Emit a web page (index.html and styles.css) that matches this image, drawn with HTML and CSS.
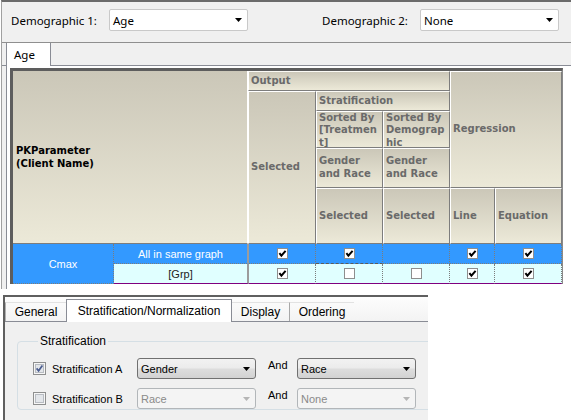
FILE: index.html
```html
<!DOCTYPE html>
<html>
<head>
  <meta charset="UTF-8">
  <title>Demographic output</title>
  <link rel="stylesheet" href="styles.css">
</head>
<body>
  <svg class="defs" width="0" height="0">
    <symbol id="chk" viewBox="0 0 11 11">
      <rect x="0.5" y="0.5" width="10" height="10" fill="#fff" stroke="#8e8e8e"/>
      <path d="M2.4 5.2 4.4 7.6 8.6 2.8" fill="none" stroke="#000" stroke-width="2"/>
    </symbol>
    <symbol id="box" viewBox="0 0 11 11">
      <rect x="0.5" y="0.5" width="10" height="10" fill="#fff" stroke="#8e8e8e"/>
    </symbol>
    <symbol id="arrow" viewBox="0 0 7 4">
      <path d="M0 0h7L3.5 4z" fill="currentColor"/>
    </symbol>
    <symbol id="win-chk" viewBox="0 0 13 13">
      <rect x="0.5" y="0.5" width="12" height="12" fill="#f6f6f6" stroke="#8e8f8f"/>
      <rect x="2.5" y="2.5" width="8" height="8" fill="#e3e6ea" stroke="#b8bcc2"/>
      <path d="M3.6 6.4 5.6 8.8 9.4 3.6" fill="none" stroke="#4b5d8f" stroke-width="1.7"/>
    </symbol>
    <symbol id="win-box" viewBox="0 0 13 13">
      <rect x="0.5" y="0.5" width="12" height="12" fill="#f6f6f6" stroke="#8e8f8f"/>
      <rect x="2.5" y="2.5" width="8" height="8" fill="#e3e6ea" stroke="#b8bcc2"/>
    </symbol>
  </svg>

  <div class="shot shot-top">
    <div class="filters">
      <div class="field">
        <span class="field-label">Demographic 1:</span>
        <div class="combo combo-white"><span>Age</span><svg class="arrow"><use href="#arrow"/></svg></div>
      </div>
      <div class="field">
        <span class="field-label">Demographic 2:</span>
        <div class="combo combo-white"><span>None</span><svg class="arrow"><use href="#arrow"/></svg></div>
      </div>
    </div>

    <div class="tabstrip">
      <div class="tab-age">Age</div>
    </div>

    <div class="tabpage">
      <div class="grid">
        <div class="head">
          <div class="hc pk">PKParameter<br>(Client Name)</div>
          <div class="hc output top">Output</div>
          <div class="hc reg">Regression</div>
          <div class="hc sel">Selected</div>
          <div class="hc strat top">Stratification</div>
          <div class="hc sort sort-t">Sorted By [Treatment]</div>
          <div class="hc sort sort-d">Sorted By Demographic</div>
          <div class="hc gr-t">Gender and Race</div>
          <div class="hc gr-d">Gender and Race</div>
          <div class="hc s-t">Selected</div>
          <div class="hc s-d">Selected</div>
          <div class="hc line">Line</div>
          <div class="hc eq">Equation</div>
        </div>

        <div class="body">
          <div class="bc cmax">Cmax</div>
          <div class="bc r1 name">All in same graph</div>
          <div class="bc r1"><svg class="cb"><use href="#chk"/></svg></div>
          <div class="bc r1 focus"><svg class="cb"><use href="#chk"/></svg></div>
          <div class="bc r1"></div>
          <div class="bc r1"><svg class="cb"><use href="#chk"/></svg></div>
          <div class="bc r1"><svg class="cb"><use href="#chk"/></svg></div>

          <div class="bc r2 name">[Grp]</div>
          <div class="bc r2"><svg class="cb"><use href="#chk"/></svg></div>
          <div class="bc r2"><svg class="cb"><use href="#box"/></svg></div>
          <div class="bc r2"><svg class="cb"><use href="#box"/></svg></div>
          <div class="bc r2"><svg class="cb"><use href="#chk"/></svg></div>
          <div class="bc r2"><svg class="cb"><use href="#chk"/></svg></div>
        </div>
      </div>
    </div>
  </div>

  <div class="shot shot-bottom">
    <div class="btabs">
      <div class="btab general">General</div>
      <div class="btab active">Stratification/Normalization</div>
      <div class="btab display">Display</div>
      <div class="btab ordering">Ordering</div>
    </div>

    <div class="bpage">
      <fieldset class="group">
        <legend>Stratification</legend>

        <div class="srow">
          <svg class="wcb"><use href="#win-chk"/></svg>
          <span class="slabel">Stratification A</span>
          <div class="combo gcombo"><span>Gender</span><svg class="arrow"><use href="#arrow"/></svg></div>
          <span class="and">And</span>
          <div class="combo gcombo"><span>Race</span><svg class="arrow"><use href="#arrow"/></svg></div>
        </div>

        <div class="srow">
          <svg class="wcb"><use href="#win-box"/></svg>
          <span class="slabel">Stratification B</span>
          <div class="combo gcombo off"><span>Race</span><svg class="arrow"><use href="#arrow"/></svg></div>
          <span class="and">And</span>
          <div class="combo gcombo off"><span>None</span><svg class="arrow"><use href="#arrow"/></svg></div>
        </div>
      </fieldset>
    </div>
  </div>
</body>
</html>
```

FILE: styles.css
```css
body {
  margin: 0;
  background: #fff;
  font-family: "Liberation Sans", Arial, sans-serif;
  color: #000;
}
.defs {
  display: block;
  width: 0;
  height: 0;
  overflow: hidden;
}
.shot {
  box-sizing: border-box;
  background: #f0f0f0;
}

/* top window */
.shot-top {
  width: 570px;
  height: 289px;
  margin-left: 1px;
  border-top: 2px solid #6b6b6b;
  border-left: 1px solid #a0a0a0;
}
.filters {
  height: 40px;
  box-sizing: border-box;
  display: flex;
  justify-content: space-between;
  padding: 7px 12px 0 9px;
  font-family: "Noto Sans", sans-serif;
  font-size: 11.5px;
}
.field {
  display: flex;
  align-items: center;
  height: 22px;
}
.field-label {
  width: 98px;
}
.combo {
  display: flex;
  align-items: center;
  justify-content: space-between;
  box-sizing: border-box;
}
.combo-white {
  width: 139px;
  height: 22px;
  background: #fff;
  border: 1px solid #c9c9c9;
  border-radius: 2px;
  padding: 0 5px 0 3px;
}
.arrow {
  width: 7px;
  height: 4px;
  color: #000;
}
.tabstrip {
  height: 24px;
  box-sizing: border-box;
  border-top: 1px solid #8f8f8f;
  border-bottom: 1px solid #898c95;
  padding-left: 4px;
  display: flex;
  align-items: flex-end;
}
.tab-age {
  width: 45px;
  height: 23px;
  margin-bottom: -1px;
  box-sizing: border-box;
  background: #fff;
  border-left: 1px solid #898c95;
  border-right: 1px solid #898c95;
  padding: 4px 0 0 7px;
  font-family: "Noto Sans", sans-serif;
  font-size: 11.5px;
  line-height: 16px;
}
.tabpage {
  height: 223px;
  box-sizing: border-box;
  margin-left: 4px;
  border-left: 1px solid #898c95;
  background: #fff;
  padding: 2px 0 0 3px;
}

/* grid */
.grid {
  width: 553px;
  box-sizing: border-box;
  border-top: 3px solid #5d5d5d;
  border-left: 3px solid #5d5d5d;
  border-right: 1px solid #8a8a8a;
}
.head {
  display: grid;
  grid-template-columns: 235px 68px 67px 67px 45px 67px;
  grid-template-rows: 20px 20px 37px 40px 56px;
}
.hc {
  box-sizing: border-box;
  display: flex;
  align-items: center;
  padding: 0 2px;
  overflow: hidden;
  background: linear-gradient(#cbc7b8, #ece9d8);
  border-top: 1px solid #fff;
  border-left: 1px solid #fff;
  border-right: 1px solid #7d7d7d;
  border-bottom: 1px solid #7d7d7d;
  font-family: "DejaVu Sans", Verdana, sans-serif;
  font-weight: bold;
  font-size: 10px;
  line-height: 12.6px;
  color: #6a6a6a;
}
.pk {
  grid-column: 1;
  grid-row: 1 / 6;
  padding-left: 3px;
  color: #000;
  border-top: 0;
  border-left: 0;
  border-right-color: #fff;
  line-height: 13px;
}
.output { grid-column: 2 / 5; grid-row: 1; }
.reg { grid-column: 5 / 7; grid-row: 1 / 5; }
.sel { grid-column: 2; grid-row: 2 / 6; }
.strat { grid-column: 3 / 5; grid-row: 2; }
.sort-t { grid-column: 3; grid-row: 3; }
.sort-d { grid-column: 4; grid-row: 3; }
.gr-t { grid-column: 3; grid-row: 4; }
.gr-d { grid-column: 4; grid-row: 4; }
.s-t { grid-column: 3; grid-row: 5; }
.s-d { grid-column: 4; grid-row: 5; }
.line { grid-column: 5; grid-row: 5; }
.eq { grid-column: 6; grid-row: 5; }
.sort {
  align-items: flex-start;
  overflow-wrap: anywhere;
  line-height: 12.3px;
}
.top {
  border-top-color: #fbfaf5;
}

.body {
  display: grid;
  grid-template-columns: 101px 135px 67px 67px 67px 45px 67px;
  grid-template-rows: 20px 20px;
  font-size: 11px;
}
.bc {
  box-sizing: border-box;
  display: flex;
  align-items: center;
  justify-content: center;
  border-right: 1px dotted #7c7c7c;
  border-bottom: 1px dotted #7c7c7c;
}
.r1 {
  background: #3399ff;
  color: #fff;
}
.r2 {
  background: #e0ffff;
  color: #222;
  border-bottom: 1px solid #7f007f;
}
.cmax {
  grid-row: 1 / 3;
  background: #3399ff;
  color: #fff;
}
.name {
  border-right: 2px solid #9c9c9c;
}
.focus {
  border-bottom: 1px dashed #5a5a5a;
}
.cb {
  width: 11px;
  height: 11px;
}

/* bottom window */
.shot-bottom {
  width: 425px;
  height: 125px;
  margin: 6px 0 0 3px;
  border-top: 2px solid #5f5f5f;
  border-left: 2px solid #5f5f5f;
  overflow: hidden;
}
.btabs {
  height: 25px;
  box-sizing: border-box;
  border-bottom: 1px solid #898c95;
  background: linear-gradient(#fdfdfd, #f3f3f3);
  display: flex;
  align-items: flex-end;
}
.btab {
  height: 19px;
  box-sizing: border-box;
  text-align: center;
  font-size: 12px;
  line-height: 18px;
  border-top: 1px solid #e2e2e2;
}
.general {
  width: 61px;
  border-left: 1px solid #b0b0b0;
}
.btab.active {
  width: 166px;
  height: 23px;
  margin-bottom: -1px;
  padding-top: 2px;
  background: #fff;
  border: 1px solid #898c95;
  border-bottom: 0;
}
.display {
  width: 57px;
}
.ordering {
  width: 65px;
  border-left: 1px solid #a8a8a8;
}
.bpage {
  padding: 12px 0 0 12px;
}
.group {
  width: 600px;
  margin: 0;
  padding: 10px 0 0 15px;
  border: 1px solid #d5dfe5;
  border-radius: 4px;
}
.group legend {
  margin-left: 5px;
  padding: 0 2px;
  font-size: 12px;
  line-height: 14px;
}
.srow {
  display: flex;
  align-items: center;
  height: 21px;
  font-size: 11px;
}
.srow + .srow {
  margin-top: 9px;
}
.wcb {
  width: 13px;
  height: 13px;
  margin-right: 6px;
}
.slabel {
  width: 85px;
}
.gcombo {
  width: 119px;
  height: 21px;
  border: 1px solid #707070;
  border-radius: 3px;
  padding: 0 5px 0 3px;
  background: linear-gradient(#f2f2f2, #ebebeb 48%, #dddddd 52%, #d2d2d2);
}
.gcombo.off {
  border-color: #b2b6b9;
  background: #f4f4f4;
  color: #8a8a8a;
}
.gcombo.off .arrow {
  color: #b5b5b5;
}
.and {
  width: 41px;
  box-sizing: border-box;
  padding-left: 12px;
  align-self: flex-start;
  line-height: 14px;
}
```
